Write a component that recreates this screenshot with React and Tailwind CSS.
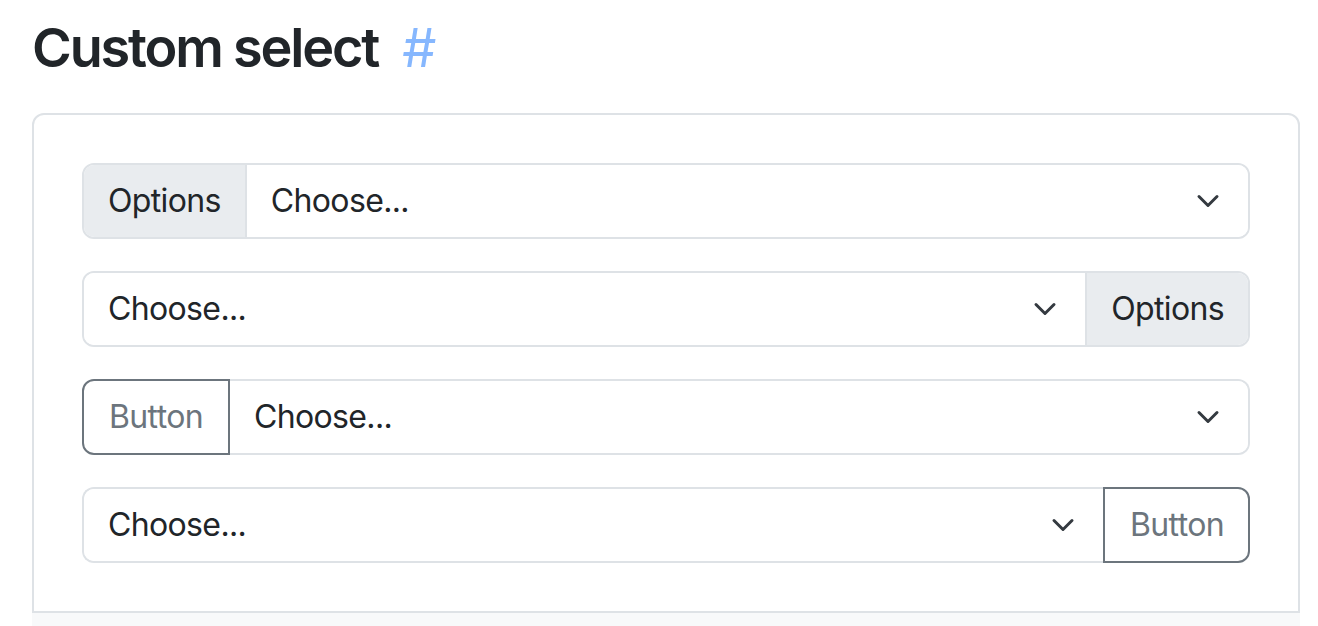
import React from "react";

function Chevron() {
  return (
    <svg width="24" height="24" viewBox="0 0 16 16" className="shrink-0">
      <path d="m2 5 6 6 6-6" fill="none" stroke="#343a40" strokeWidth="2" strokeLinecap="round" strokeLinejoin="round" />
    </svg>
  );
}

function Select({ className = "" }) {
  return (
    <div className={`flex-1 flex items-center justify-between pl-[24px] pr-[28px] bg-white text-[#212529] ${className}`}>
      <span>Choose...</span>
      <Chevron />
    </div>
  );
}

export default function App() {
  return (
    <div className="bg-white min-h-[626px] w-[1318px] overflow-hidden" style={{ fontFamily: "Inter, 'Noto Sans', sans-serif" }}>
      <h2 className="ml-[32px] mt-[14px] mb-[32px] text-[54px] leading-[67px] font-semibold text-[#212529] tracking-[-0.04em] flex items-baseline">
        <span>Custom select</span>
        <span className="ml-[24px] font-normal text-[#86b7fe] tracking-normal">#</span>
      </h2>
      <div className="ml-[32px] w-[1268px] border-2 border-[#dee2e6] rounded-t-[12px] p-[48px] flex flex-col gap-[32px] text-[32px] leading-[48px] tracking-[-0.02em]">
        <div className="flex h-[76px] border-2 border-[#dee2e6] rounded-[12px] overflow-hidden">
          <div className="flex items-center px-[24px] bg-[#e9ecef] border-r-2 border-[#dee2e6] text-[#212529]">Options</div>
          <Select />
        </div>
        <div className="flex h-[76px] border-2 border-[#dee2e6] rounded-[12px] overflow-hidden">
          <Select />
          <div className="flex items-center px-[24px] bg-[#e9ecef] border-l-2 border-[#dee2e6] text-[#212529]">Options</div>
        </div>
        <div className="flex h-[76px]">
          <div className="flex items-center px-[25px] border-2 border-[#6c757d] rounded-l-[12px] text-[#6c757d]">Button</div>
          <div className="flex-1 flex border-2 border-l-0 border-[#dee2e6] rounded-r-[12px] overflow-hidden">
            <Select />
          </div>
        </div>
        <div className="flex h-[76px]">
          <div className="flex-1 flex border-2 border-r-0 border-[#dee2e6] rounded-l-[12px] overflow-hidden">
            <Select />
          </div>
          <div className="flex items-center pl-[25px] pr-[24px] border-2 border-[#6c757d] rounded-r-[12px] text-[#6c757d]">Button</div>
        </div>
      </div>
      <div className="ml-[32px] w-[1268px] h-[40px] bg-[#f8f9fa]"></div>
    </div>
  );
}
